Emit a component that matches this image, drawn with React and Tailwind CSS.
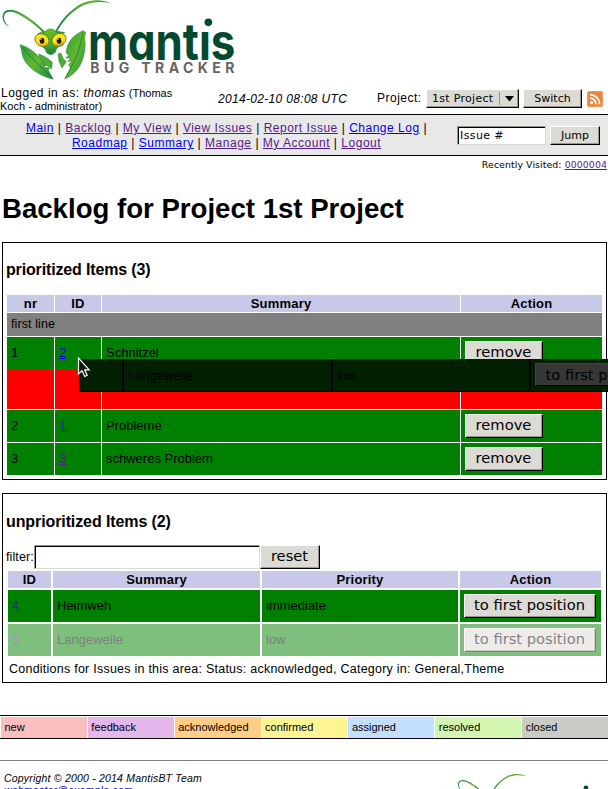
import React from "react";

function Logo({ className }) {
  return (
    <svg className={className} viewBox="0 0 720 246" aria-label="Mantis Bug Tracker">
      <defs>
        <linearGradient id="claw" x1="0" y1="0" x2="1" y2="1">
          <stop offset="0" stopColor="#2c9a3c" />
          <stop offset="0.5" stopColor="#62b82c" />
          <stop offset="1" stopColor="#128a42" />
        </linearGradient>
        <linearGradient id="face" x1="0" y1="0" x2="0" y2="1">
          <stop offset="0" stopColor="#6cbd22" />
          <stop offset="0.6" stopColor="#48a82e" />
          <stop offset="1" stopColor="#16803c" />
        </linearGradient>
        <linearGradient id="feeler" x1="0" y1="0" x2="1" y2="0">
          <stop offset="0" stopColor="#148c48" />
          <stop offset="0.6" stopColor="#62b030" />
          <stop offset="1" stopColor="#2a9040" />
        </linearGradient>
      </defs>
      <path d="M28 79C11 73 5 57 9 42C16 22 45 27 72 44C98 60 116 75 136 97L131 99C111 79 92 65 70 51C43 34 21 30 14 43C9 56 15 70 28 79Z" fill="url(#feeler)" />
      <path d="M164 97C183 59 213 26 249 9C277-3 306-2 334 10C306 4 279 4 252 15C216 32 190 61 169 98Z" fill="url(#feeler)" />
      <path d="M116 162C129 166 147 176 157 187L155 207L139 196L120 184Z" fill="#4ead2c" stroke="#27853a" strokeWidth="1.5" />
      <path d="M174 162L183 159L189 175L199 185L186 204L177 184Z" fill="#4ead2c" stroke="#27853a" strokeWidth="1.5" />
      <path d="M60 134C75 138 93 147 106 160C119 172 126 179 131 187L124 188L139 194L131 202L148 204L145 211L160 238C125 230 93 211 75 184C65 168 66 153 60 134Z" fill="url(#claw)" stroke="#24883a" strokeWidth="1.5" />
      <path d="M67 141C86 166 119 197 157 235" stroke="#17763d" strokeWidth="2.5" fill="none" />
      <path d="M250 92C221 103 201 126 198 157L205 167L198 174L211 174L204 184L215 183L206 195L211 204L194 237C232 222 250 187 254 151C259 129 250 114 258 98Z" fill="url(#claw)" stroke="#24883a" strokeWidth="1.5" />
      <path d="M249 98C243 138 227 181 197 233" stroke="#17763d" strokeWidth="2.5" fill="none" />
      <path d="M134 97C142 85 160 83 168 96C177 93 190 98 194 106L188 137C174 137 169 145 166 156C160 166 144 166 139 156C136 145 129 138 116 137L109 109C114 98 125 95 134 97Z" fill="url(#face)" stroke="#28852f" strokeWidth="2" />
      <path d="M132 97L124 89M168 96L194 98" stroke="#328e31" strokeWidth="4" />
      <ellipse cx="126" cy="120" rx="22" ry="18" transform="rotate(28 126 120)" fill="#ffe21b" stroke="#4a8221" strokeWidth="2.5" />
      <ellipse cx="177" cy="119" rx="22" ry="18" transform="rotate(-28 177 119)" fill="#ffe21b" stroke="#4a8221" strokeWidth="2.5" />
      <path d="M110 130Q126 142 141 129M161 132Q179 139 192 125" stroke="#f6a61e" strokeWidth="5" fill="none" />
      <ellipse cx="126" cy="122" rx="7" ry="9" fill="#171b12" />
      <ellipse cx="177" cy="122" rx="7" ry="9" fill="#171b12" />
      <circle cx="123" cy="117" r="2.5" fill="#fff" />
      <circle cx="174" cy="117" r="2.5" fill="#fff" />
      <text x="264" y="181" textLength="442" lengthAdjust="spacingAndGlyphs" fill="#044a31" className="font-['Inter'] text-[152px] font-bold [font-feature-settings:'cv11']">mantıs</text>
      <circle cx="625" cy="67" r="11.5" fill="#044a31" />
      <text x="271" y="220" textLength="432" fill="#666462" className="font-['Inter'] text-[42px] font-bold">BUG TRACKER</text>
    </svg>
  );
}

const bevel = "border border-t-white border-l-white border-r-black border-b-black bg-[#dcdad5] shadow-[inset_-1px_-1px_0_#9b9790] font-['DejaVu_Sans',sans-serif] text-black text-center whitespace-nowrap";

function BigButton({ children, className = "" }) {
  return <button className={`${bevel} block h-6 pr-px pb-[2px] text-[14.7px] leading-[20px] ${className}`}>{children}</button>;
}

function A({ v, children }) {
  return <a className={`underline ${v ? "text-[#551a8b]" : "text-[#0000ee]"}`}>{children}</a>;
}

const th = "bg-[#c8c8e8] text-center font-bold tracking-[0.2px] leading-[17px]";
const td = "bg-[#008000] pl-1 leading-8";
const cols1 = "grid grid-cols-[47px_46px_358px_141px] gap-x-px";
const cols2 = "grid grid-cols-[43px_207px_196px_141px] gap-x-[2px]";

function Prioritized({ nr, id, name, visited }) {
  return (
    <div className={`${cols1} h-8`}>
      <div className={td}>{nr}</div>
      <div className={td}><A v={visited}>{id}</A></div>
      <div className={td}>{name}</div>
      <div className="bg-[#008000] pl-1 pt-1"><BigButton className="w-[78px]">remove</BigButton></div>
    </div>
  );
}

function Unprioritized({ id, name, priority, faded }) {
  return (
    <div className={`${cols2} h-8 ${faded ? "opacity-50" : ""}`}>
      <div className={td}><A v>{id}</A></div>
      <div className={td}>{name}</div>
      <div className={td}>{priority}</div>
      <div className="bg-[#008000] pl-1 pt-1"><BigButton className="w-[132px]">to first position</BigButton></div>
    </div>
  );
}

function DraggedRow() {
  return (
    <div className="absolute left-[79px] top-[359px] flex h-[33px] w-[529px] overflow-hidden border-b border-black bg-[#002000] leading-[33px] text-black">
      <div className="w-[45px] shrink-0 border-r-2 border-black pl-1"><span className="text-[#150723] underline">5</span></div>
      <div className="w-[209px] shrink-0 border-r-2 border-black pl-1">Langeweile</div>
      <div className="w-[198px] shrink-0 border-r-2 border-black pl-1">low</div>
      <div className="shrink-0 pl-1 pt-1">
        <div className="h-[23px] w-[132px] border border-[#454545] border-b-black bg-[#373635] text-center font-['DejaVu_Sans',sans-serif] text-[14.7px] leading-[21px] whitespace-nowrap">to first position</div>
      </div>
    </div>
  );
}

const statuses = [
  ["new", "bg-[#fcbdbd]"],
  ["feedback", "bg-[#e3b7eb]"],
  ["acknowledged", "bg-[#ffcd85]"],
  ["confirmed", "bg-[#fff494]"],
  ["assigned", "bg-[#c2dfff]"],
  ["resolved", "bg-[#d2f5b0]"],
  ["closed", "bg-[#c9ccc4]"],
];

export default function App() {
  return (
    <div className="relative flex h-[789px] w-[608px] flex-col overflow-hidden bg-white font-['Liberation_Sans',Arial,sans-serif] text-[13px] text-black">
      <header className="h-[82px] shrink-0"><Logo className="h-[82px] w-[240px]" /></header>
      <div className="flex h-8 shrink-0">
        <div className="w-[206px] pt-[5px] pl-px text-[11px] leading-[13px] whitespace-nowrap">
          <div><span className="text-[12px] tracking-[0.5px]">Logged in as: <i>thomas</i></span> <span>(Thomas</span></div>
          <div className="-ml-px">Koch - administrator)</div>
        </div>
        <div className="w-[171px] pl-3 pt-[9px] text-[12px] leading-4 italic tracking-[0.32px] whitespace-nowrap">2014-02-10 08:08 UTC</div>
        <div className="flex flex-1 pt-[7px]">
          <span className="w-[49px] text-[12px] leading-[19px] tracking-[0.5px] whitespace-nowrap">Project:</span>
          <div className={`${bevel} flex h-[19px] w-[93px] pl-[5px] text-[11px] leading-[17px]`}>
            <span className="w-[67px] text-left tracking-[0.3px]">1st Project</span>
            <span className="my-[2px] border-l border-[#9b9790] pl-[5px]"><svg className="mt-1 h-[6px] w-[9px]" viewBox="0 0 9 6"><path d="M0 0H9L4.5 5.5Z" /></svg></span>
          </div>
          <button className={`${bevel} ml-1 h-[19px] w-[59px] text-[11px] leading-[16px]`}>Switch</button>
          <svg className="ml-[5px] mt-[2px] h-4 w-4" viewBox="0 0 16 16">
            <rect width="16" height="16" rx="2.5" fill="#ee8139" />
            <rect x=".7" y=".7" width="14.6" height="14.6" rx="2" fill="none" stroke="#f5a45c" />
            <circle cx="4.6" cy="11.6" r="1.6" fill="#fff" />
            <path d="M3 7.2A6 6 0 0 1 9 13.2M3 3.6A9.6 9.6 0 0 1 12.6 13.2" fill="none" stroke="#fff" strokeWidth="1.8" />
          </svg>
        </div>
      </div>
      <nav className="flex h-[42px] shrink-0 border-y border-black bg-[#e8e8e8]">
        <div className="w-[453px] pt-[6px] text-center text-[12px] leading-[15px] tracking-[0.51px] whitespace-nowrap">
          <div><A>Main</A> | <A v>Backlog</A> | <A v>My View</A> | <A v>View Issues</A> | <A v>Report Issue</A> | <A>Change Log</A> |</div>
          <div><A>Roadmap</A> | <A>Summary</A> | <A v>Manage</A> | <A v>My Account</A> | <A v>Logout</A></div>
        </div>
        <div className="flex pl-1 pt-[11px] font-['DejaVu_Sans',sans-serif] text-[11px]">
          <div className="h-[19px] w-[89px] border border-[#9b9790] border-b-[#dcdad5] border-r-[#dcdad5] bg-white pl-[2px] leading-[17px] tracking-[0.4px] shadow-[inset_1px_1px_0_#000]">Issue #</div>
          <button className={`${bevel} ml-1 h-[19px] w-[50px] leading-[17px]`}>Jump</button>
        </div>
      </nav>
      <div className="h-9 shrink-0 pr-px pt-[3px] text-right font-['DejaVu_Sans',sans-serif] text-[9.4px] leading-3 tracking-[0.08px]">Recently Visited: <A v>0000004</A></div>
      <h1 className="h-[50px] shrink-0 pl-[2px] text-[27.6px] leading-[34px] font-bold whitespace-nowrap">Backlog for Project 1st Project</h1>

      <section className="mr-px ml-[2px] h-[238px] shrink-0 border border-black px-1">
        <h3 className="-ml-px h-[52px] pt-[17px] text-[16px] leading-5 font-bold tracking-[-0.15px]">prioritized Items (3)</h3>
        <div className="flex flex-col gap-px">
          <div className={`${cols1} h-[17px]`}><div className={th}>nr</div><div className={th}>ID</div><div className={th}>Summary</div><div className={th}>Action</div></div>
          <div className="h-[23px] w-[595px] bg-[#808080] pl-1 text-[12.5px] leading-[23px] tracking-[0.1px]">first line</div>
          <div>
            <Prioritized nr="1" id="2" name="Schnitzel" />
            <div className={`${cols1} h-10`}><div className="bg-[#ff0000]" /><div className="bg-[#ff0000]" /><div className="bg-[#ff0000]" /><div className="bg-[#ff0000]" /></div>
          </div>
          <Prioritized nr="2" id="1" name="Probleme" visited />
          <Prioritized nr="3" id="3" name="schweres Problem" visited />
        </div>
      </section>

      <section className="mt-[13px] mr-px ml-[2px] h-[190px] shrink-0 border border-black px-[5px]">
        <h3 className="-ml-[2px] h-[51px] pt-[18px] text-[16px] leading-5 font-bold tracking-[-0.1px]">unprioritized Items (2)</h3>
        <div className="-ml-[2px] flex h-[26px]">
          <span className="w-[28px] text-[12.5px] leading-[25px] tracking-[0.1px] whitespace-nowrap">filter:</span>
          <div className="h-6 w-[226px] border border-[#9b9790] border-r-[#dcdad5] border-b-[#dcdad5] bg-white shadow-[inset_1px_1px_0_#000]" />
          <BigButton className="w-[60px]">reset</BigButton>
        </div>
        <div className="flex flex-col gap-[2px]">
          <div className={`${cols2} h-[17px]`}><div className={th}>ID</div><div className={th}>Summary</div><div className={th}>Priority</div><div className={th}>Action</div></div>
          <Unprioritized id="4" name="Heimweh" priority="immediate" />
          <Unprioritized id="5" name="Langeweile" priority="low" faded />
        </div>
        <p className="pl-px leading-[26px] text-[12.5px] tracking-[0.24px] whitespace-nowrap">Conditions for Issues in this area: Status: acknowledged, Category in: General,Theme</p>
      </section>

      <div className="mt-8 grid h-6 shrink-0 grid-cols-7 gap-x-px border-y border-black py-px pl-px text-[11px] leading-[21px]">
        {statuses.map(([name, color]) => <div key={name} className={`${color} pl-[3.5px]`}>{name}</div>)}
      </div>
      <footer className="mt-[21px] flex h-[90px] shrink-0 justify-between border-t border-[#808080]">
        <address className="pl-1 pt-[11px] text-[10.5px] leading-[12px] tracking-[0.2px]">Copyright © 2000 - 2014 MantisBT Team<br /><A>webmaster@example.com</A></address>
        <Logo className="mt-[13px] mr-[2px] h-[51px] w-[150px]" />
      </footer>
      <DraggedRow />
      <svg className="absolute left-[77px] top-[356px] h-[22px] w-[14px]" viewBox="0 0 14 22">
        <path d="M1.5 2V18L5 14.8L7.8 20.5L10.2 19.3L7.7 13.8H12.2Z" fill="#161616" stroke="#fff" strokeWidth="1.2" />
      </svg>
    </div>
  );
}
